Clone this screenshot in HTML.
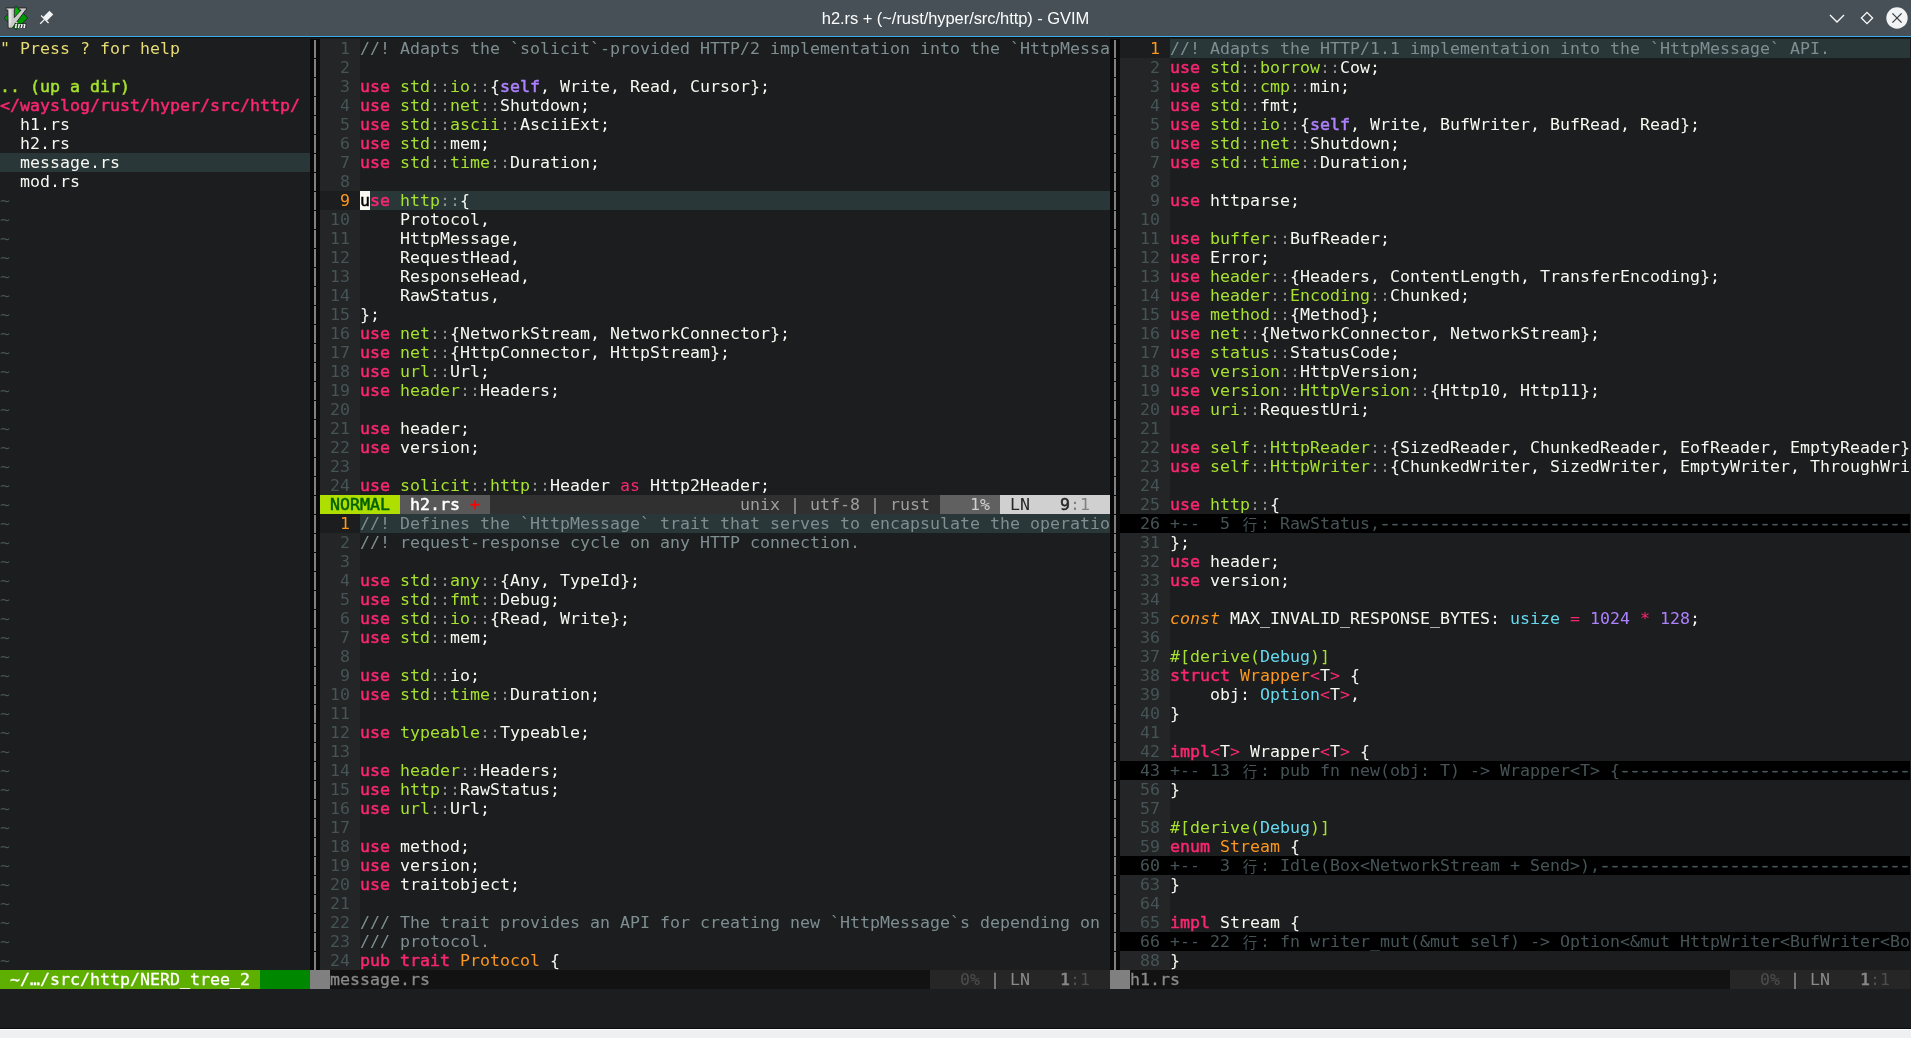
<!DOCTYPE html><html><head><meta charset="utf-8"><title>h2.rs + (~/rust/hyper/src/http) - GVIM</title><style>
html,body{margin:0;padding:0;}
body{width:1911px;height:1038px;overflow:hidden;background:#1b1d1e;position:relative;}
#tb{position:absolute;left:0;top:0;width:1911px;height:36px;background:#475057;}
#tbl{position:absolute;left:0;top:36px;width:1911px;height:1px;background:#3daee9;}
#tbd{position:absolute;left:0;top:37px;width:1911px;height:1px;background:#0e0f10;}
#title{position:absolute;left:0;top:0;width:1911px;height:36px;line-height:36px;text-align:center;color:#fcfcfc;font-family:"Liberation Sans",sans-serif;font-size:16.5px;letter-spacing:-0.06px;will-change:transform;}
#bot{position:absolute;left:0;top:1028px;width:1911px;height:10px;background:#eff0f1;border-top:1px solid #0c0d0e;box-shadow:inset 0 1px 0 #fff;box-sizing:border-box;}
#ed{position:absolute;left:0;top:0;will-change:transform;font-family:"DejaVu Sans Mono","Noto Sans CJK SC",monospace;font-size:16.6px;letter-spacing:0.0060px;line-height:19px;color:#f8f8f2;}
.r{position:absolute;height:19px;white-space:pre;overflow:hidden;}
.r>u{text-decoration:none;display:block;position:relative;top:0.0px;height:19px;}
.r span{display:inline-block;height:19px;vertical-align:top;}
.w1{width:10px}.w2{width:20px}.w3{width:30px}.w4{width:40px}.w5{width:50px}.w6{width:60px}.w7{width:70px}.w8{width:80px}.w9{width:90px}.w10{width:100px}.w11{width:110px}.w12{width:120px}
.k,.s,.dir,.root,.st-mode,.st-file,.nt-a,.b9,.b1,.nc,.bar,.cursor{font-weight:normal;-webkit-text-stroke:0.5px;}
.nt-a,.nc,.bar{-webkit-text-stroke-width:0.3px;}
.k,.p,.root{color:#f92672;}
.g,.dir{color:#a6e22e;}
.d{color:#8f8f8f;}
.s,.num{color:#ae81ff;}
.o{color:#fd971f;}
.const{color:#fd971f;font-style:italic;}
.t{color:#66d9ef;}
.c{color:#7e8e91;}
.y{color:#e6db74;}
.n{color:#465457;}
.cl{background:#293739;}
.ln{background:#232526;color:#465457;}
.ln.cur{color:#fd971f;background:#1b1d1e;}
.fd{background:#000;color:#465457;}
.r .cjk{width:20px;text-align:center;letter-spacing:0;font-family:"Noto Sans CJK SC",sans-serif;font-size:14.5px;position:relative;top:-0.5px;}
.dash{text-shadow:0.8px 0 0 currentColor,-0.8px 0 0 currentColor;}
.vs{background:#080808;}
.vs i{position:absolute;left:4px;top:1px;width:2px;height:18px;background:#808080;}
.cursor{background:#f8f8f0;color:#000;}
.st-mode{background:#afdf00;color:#005f00;}
.st-file{background:#585858;color:#fff;}
.plus{color:#ff0000;}
.st-mid{background:#303030;color:#9e9e9e;}
.st-pct{background:#606060;color:#d0d0d0;}
.st-ln{background:#d0d0d0;color:#262626;}
.dim{color:#808080;}
.nt-a{background:#5faf00;color:#fff;}
.nt-b{background:#008700;}
.blk{background:#808080;}
.nc{background:#121212;color:#8a8a8a;}
.nc2{background:#262626;color:#8a8a8a;}
.dd{color:#4e4e4e;}
</style></head><body>
<div id="tb"></div><div id="tbl"></div><div id="tbd"></div>
<div id="title">h2.rs + (~/rust/hyper/src/http) - GVIM</div>
<svg id="ic" width="1911" height="36" viewBox="0 0 1911 36" style="position:absolute;left:0;top:0">
<g id="vim">
<polygon points="16,6.3 27.8,18 16,29.7 4.2,18" fill="#009a00" stroke="#0b2a2a" stroke-width="0.9"/>
<polygon points="16,7.4 21,12.4 16,17.4 11,12.4" fill="#00b400"/>
<polygon points="5.9,7.9 14.65,7.9 14.65,10 14.3,10 14.3,17.6 21.1,10 19,10 19,7.9 26.4,7.9 26.4,10 25.6,10 12.1,28.2 8.2,28.2 7.9,10 5.9,10" fill="#cbcbcb" stroke="#242424" stroke-width="0.9" stroke-linejoin="round"/>
<polygon points="8.8,9 11.4,9 11.4,21 9.4,26.8 8.8,26.8" fill="#e2e2e2"/>
<rect x="14.4" y="23" width="12" height="5" fill="#1c1c1c" opacity="0.55"/>
<text x="14.6" y="27.7" font-family="Liberation Serif,serif" font-style="italic" font-weight="bold" font-size="7.5" fill="#f4f4f4" textLength="11.5" lengthAdjust="spacingAndGlyphs">im</text>
</g>
<g id="pin" transform="translate(44.85,19.15) rotate(45)" fill="#f2f3f4">
<rect x="-2.7" y="-9.2" width="5.4" height="9.2"/>
<rect x="-5.3" y="-0.6" width="10.6" height="1.3"/>
<rect x="-0.65" y="0" width="1.3" height="6.6"/>
</g>
<g fill="none" stroke="#fcfcfc" stroke-width="1.3">
<polyline points="1830,15 1837,22 1844,15"/>
<polygon points="1867,12.4 1872.6,18 1867,23.6 1861.4,18"/>
</g>
<circle cx="1897" cy="18" r="10.7" fill="#f2f3f4"/>
<g stroke="#3a4248" stroke-width="1.3"><line x1="1892.4" y1="13.4" x2="1901.6" y2="22.6"/><line x1="1901.6" y1="13.4" x2="1892.4" y2="22.6"/></g>
</svg>

<div id="ed">
<div class="r" style="left:0px;top:39px;width:310px"><u><span class="y w2">" </span><span class="y w6">Press </span><span class="y w2">? </span><span class="y w4">for </span><span class="y w4">help</span></u></div>
<div class="r" style="left:0px;top:77px;width:310px"><u><span class="dir w3">.. </span><span class="dir w4">(up </span><span class="dir w2">a </span><span class="dir w4">dir)</span></u></div>
<div class="r" style="left:0px;top:96px;width:310px"><u><span class="root w12">&lt;/wayslog/ru</span><span class="root w12">st/hyper/src</span><span class="root w6">/http/</span></u></div>
<div class="r" style="left:0px;top:115px;width:310px"><u><span class="w2">  </span><span class="w5">h1.rs</span></u></div>
<div class="r" style="left:0px;top:134px;width:310px"><u><span class="w2">  </span><span class="w5">h2.rs</span></u></div>
<div class="r cl" style="left:0px;top:153px;width:310px"><u><span class="w2">  </span><span class="w10">message.rs</span></u></div>
<div class="r" style="left:0px;top:172px;width:310px"><u><span class="w2">  </span><span class="w6">mod.rs</span></u></div>
<div class="r" style="left:0px;top:191px;width:310px"><u><span class="n w1">~</span></u></div>
<div class="r" style="left:0px;top:210px;width:310px"><u><span class="n w1">~</span></u></div>
<div class="r" style="left:0px;top:229px;width:310px"><u><span class="n w1">~</span></u></div>
<div class="r" style="left:0px;top:248px;width:310px"><u><span class="n w1">~</span></u></div>
<div class="r" style="left:0px;top:267px;width:310px"><u><span class="n w1">~</span></u></div>
<div class="r" style="left:0px;top:286px;width:310px"><u><span class="n w1">~</span></u></div>
<div class="r" style="left:0px;top:305px;width:310px"><u><span class="n w1">~</span></u></div>
<div class="r" style="left:0px;top:324px;width:310px"><u><span class="n w1">~</span></u></div>
<div class="r" style="left:0px;top:343px;width:310px"><u><span class="n w1">~</span></u></div>
<div class="r" style="left:0px;top:362px;width:310px"><u><span class="n w1">~</span></u></div>
<div class="r" style="left:0px;top:381px;width:310px"><u><span class="n w1">~</span></u></div>
<div class="r" style="left:0px;top:400px;width:310px"><u><span class="n w1">~</span></u></div>
<div class="r" style="left:0px;top:419px;width:310px"><u><span class="n w1">~</span></u></div>
<div class="r" style="left:0px;top:438px;width:310px"><u><span class="n w1">~</span></u></div>
<div class="r" style="left:0px;top:457px;width:310px"><u><span class="n w1">~</span></u></div>
<div class="r" style="left:0px;top:476px;width:310px"><u><span class="n w1">~</span></u></div>
<div class="r" style="left:0px;top:495px;width:310px"><u><span class="n w1">~</span></u></div>
<div class="r" style="left:0px;top:514px;width:310px"><u><span class="n w1">~</span></u></div>
<div class="r" style="left:0px;top:533px;width:310px"><u><span class="n w1">~</span></u></div>
<div class="r" style="left:0px;top:552px;width:310px"><u><span class="n w1">~</span></u></div>
<div class="r" style="left:0px;top:571px;width:310px"><u><span class="n w1">~</span></u></div>
<div class="r" style="left:0px;top:590px;width:310px"><u><span class="n w1">~</span></u></div>
<div class="r" style="left:0px;top:609px;width:310px"><u><span class="n w1">~</span></u></div>
<div class="r" style="left:0px;top:628px;width:310px"><u><span class="n w1">~</span></u></div>
<div class="r" style="left:0px;top:647px;width:310px"><u><span class="n w1">~</span></u></div>
<div class="r" style="left:0px;top:666px;width:310px"><u><span class="n w1">~</span></u></div>
<div class="r" style="left:0px;top:685px;width:310px"><u><span class="n w1">~</span></u></div>
<div class="r" style="left:0px;top:704px;width:310px"><u><span class="n w1">~</span></u></div>
<div class="r" style="left:0px;top:723px;width:310px"><u><span class="n w1">~</span></u></div>
<div class="r" style="left:0px;top:742px;width:310px"><u><span class="n w1">~</span></u></div>
<div class="r" style="left:0px;top:761px;width:310px"><u><span class="n w1">~</span></u></div>
<div class="r" style="left:0px;top:780px;width:310px"><u><span class="n w1">~</span></u></div>
<div class="r" style="left:0px;top:799px;width:310px"><u><span class="n w1">~</span></u></div>
<div class="r" style="left:0px;top:818px;width:310px"><u><span class="n w1">~</span></u></div>
<div class="r" style="left:0px;top:837px;width:310px"><u><span class="n w1">~</span></u></div>
<div class="r" style="left:0px;top:856px;width:310px"><u><span class="n w1">~</span></u></div>
<div class="r" style="left:0px;top:875px;width:310px"><u><span class="n w1">~</span></u></div>
<div class="r" style="left:0px;top:894px;width:310px"><u><span class="n w1">~</span></u></div>
<div class="r" style="left:0px;top:913px;width:310px"><u><span class="n w1">~</span></u></div>
<div class="r" style="left:0px;top:932px;width:310px"><u><span class="n w1">~</span></u></div>
<div class="r" style="left:0px;top:951px;width:310px"><u><span class="n w1">~</span></u></div>
<div class="r vs" style="left:310px;top:39px;width:10px"><i></i></div>
<div class="r vs" style="left:1110px;top:39px;width:10px"><i></i></div>
<div class="r vs" style="left:310px;top:58px;width:10px"><i></i></div>
<div class="r vs" style="left:1110px;top:58px;width:10px"><i></i></div>
<div class="r vs" style="left:310px;top:77px;width:10px"><i></i></div>
<div class="r vs" style="left:1110px;top:77px;width:10px"><i></i></div>
<div class="r vs" style="left:310px;top:96px;width:10px"><i></i></div>
<div class="r vs" style="left:1110px;top:96px;width:10px"><i></i></div>
<div class="r vs" style="left:310px;top:115px;width:10px"><i></i></div>
<div class="r vs" style="left:1110px;top:115px;width:10px"><i></i></div>
<div class="r vs" style="left:310px;top:134px;width:10px"><i></i></div>
<div class="r vs" style="left:1110px;top:134px;width:10px"><i></i></div>
<div class="r vs" style="left:310px;top:153px;width:10px"><i></i></div>
<div class="r vs" style="left:1110px;top:153px;width:10px"><i></i></div>
<div class="r vs" style="left:310px;top:172px;width:10px"><i></i></div>
<div class="r vs" style="left:1110px;top:172px;width:10px"><i></i></div>
<div class="r vs" style="left:310px;top:191px;width:10px"><i></i></div>
<div class="r vs" style="left:1110px;top:191px;width:10px"><i></i></div>
<div class="r vs" style="left:310px;top:210px;width:10px"><i></i></div>
<div class="r vs" style="left:1110px;top:210px;width:10px"><i></i></div>
<div class="r vs" style="left:310px;top:229px;width:10px"><i></i></div>
<div class="r vs" style="left:1110px;top:229px;width:10px"><i></i></div>
<div class="r vs" style="left:310px;top:248px;width:10px"><i></i></div>
<div class="r vs" style="left:1110px;top:248px;width:10px"><i></i></div>
<div class="r vs" style="left:310px;top:267px;width:10px"><i></i></div>
<div class="r vs" style="left:1110px;top:267px;width:10px"><i></i></div>
<div class="r vs" style="left:310px;top:286px;width:10px"><i></i></div>
<div class="r vs" style="left:1110px;top:286px;width:10px"><i></i></div>
<div class="r vs" style="left:310px;top:305px;width:10px"><i></i></div>
<div class="r vs" style="left:1110px;top:305px;width:10px"><i></i></div>
<div class="r vs" style="left:310px;top:324px;width:10px"><i></i></div>
<div class="r vs" style="left:1110px;top:324px;width:10px"><i></i></div>
<div class="r vs" style="left:310px;top:343px;width:10px"><i></i></div>
<div class="r vs" style="left:1110px;top:343px;width:10px"><i></i></div>
<div class="r vs" style="left:310px;top:362px;width:10px"><i></i></div>
<div class="r vs" style="left:1110px;top:362px;width:10px"><i></i></div>
<div class="r vs" style="left:310px;top:381px;width:10px"><i></i></div>
<div class="r vs" style="left:1110px;top:381px;width:10px"><i></i></div>
<div class="r vs" style="left:310px;top:400px;width:10px"><i></i></div>
<div class="r vs" style="left:1110px;top:400px;width:10px"><i></i></div>
<div class="r vs" style="left:310px;top:419px;width:10px"><i></i></div>
<div class="r vs" style="left:1110px;top:419px;width:10px"><i></i></div>
<div class="r vs" style="left:310px;top:438px;width:10px"><i></i></div>
<div class="r vs" style="left:1110px;top:438px;width:10px"><i></i></div>
<div class="r vs" style="left:310px;top:457px;width:10px"><i></i></div>
<div class="r vs" style="left:1110px;top:457px;width:10px"><i></i></div>
<div class="r vs" style="left:310px;top:476px;width:10px"><i></i></div>
<div class="r vs" style="left:1110px;top:476px;width:10px"><i></i></div>
<div class="r vs" style="left:310px;top:495px;width:10px"><i></i></div>
<div class="r vs" style="left:1110px;top:495px;width:10px"><i></i></div>
<div class="r vs" style="left:310px;top:514px;width:10px"><i></i></div>
<div class="r vs" style="left:1110px;top:514px;width:10px"><i></i></div>
<div class="r vs" style="left:310px;top:533px;width:10px"><i></i></div>
<div class="r vs" style="left:1110px;top:533px;width:10px"><i></i></div>
<div class="r vs" style="left:310px;top:552px;width:10px"><i></i></div>
<div class="r vs" style="left:1110px;top:552px;width:10px"><i></i></div>
<div class="r vs" style="left:310px;top:571px;width:10px"><i></i></div>
<div class="r vs" style="left:1110px;top:571px;width:10px"><i></i></div>
<div class="r vs" style="left:310px;top:590px;width:10px"><i></i></div>
<div class="r vs" style="left:1110px;top:590px;width:10px"><i></i></div>
<div class="r vs" style="left:310px;top:609px;width:10px"><i></i></div>
<div class="r vs" style="left:1110px;top:609px;width:10px"><i></i></div>
<div class="r vs" style="left:310px;top:628px;width:10px"><i></i></div>
<div class="r vs" style="left:1110px;top:628px;width:10px"><i></i></div>
<div class="r vs" style="left:310px;top:647px;width:10px"><i></i></div>
<div class="r vs" style="left:1110px;top:647px;width:10px"><i></i></div>
<div class="r vs" style="left:310px;top:666px;width:10px"><i></i></div>
<div class="r vs" style="left:1110px;top:666px;width:10px"><i></i></div>
<div class="r vs" style="left:310px;top:685px;width:10px"><i></i></div>
<div class="r vs" style="left:1110px;top:685px;width:10px"><i></i></div>
<div class="r vs" style="left:310px;top:704px;width:10px"><i></i></div>
<div class="r vs" style="left:1110px;top:704px;width:10px"><i></i></div>
<div class="r vs" style="left:310px;top:723px;width:10px"><i></i></div>
<div class="r vs" style="left:1110px;top:723px;width:10px"><i></i></div>
<div class="r vs" style="left:310px;top:742px;width:10px"><i></i></div>
<div class="r vs" style="left:1110px;top:742px;width:10px"><i></i></div>
<div class="r vs" style="left:310px;top:761px;width:10px"><i></i></div>
<div class="r vs" style="left:1110px;top:761px;width:10px"><i></i></div>
<div class="r vs" style="left:310px;top:780px;width:10px"><i></i></div>
<div class="r vs" style="left:1110px;top:780px;width:10px"><i></i></div>
<div class="r vs" style="left:310px;top:799px;width:10px"><i></i></div>
<div class="r vs" style="left:1110px;top:799px;width:10px"><i></i></div>
<div class="r vs" style="left:310px;top:818px;width:10px"><i></i></div>
<div class="r vs" style="left:1110px;top:818px;width:10px"><i></i></div>
<div class="r vs" style="left:310px;top:837px;width:10px"><i></i></div>
<div class="r vs" style="left:1110px;top:837px;width:10px"><i></i></div>
<div class="r vs" style="left:310px;top:856px;width:10px"><i></i></div>
<div class="r vs" style="left:1110px;top:856px;width:10px"><i></i></div>
<div class="r vs" style="left:310px;top:875px;width:10px"><i></i></div>
<div class="r vs" style="left:1110px;top:875px;width:10px"><i></i></div>
<div class="r vs" style="left:310px;top:894px;width:10px"><i></i></div>
<div class="r vs" style="left:1110px;top:894px;width:10px"><i></i></div>
<div class="r vs" style="left:310px;top:913px;width:10px"><i></i></div>
<div class="r vs" style="left:1110px;top:913px;width:10px"><i></i></div>
<div class="r vs" style="left:310px;top:932px;width:10px"><i></i></div>
<div class="r vs" style="left:1110px;top:932px;width:10px"><i></i></div>
<div class="r vs" style="left:310px;top:951px;width:10px"><i></i></div>
<div class="r vs" style="left:1110px;top:951px;width:10px"><i></i></div>
<div class="r ln" style="left:320px;top:39px;width:40px"><u><span class="w2">  </span><span class="w2">1 </span></u></div>
<div class="r" style="left:360px;top:39px;width:750px"><u><span class="c w4">//! </span><span class="c w7">Adapts </span><span class="c w4">the </span><span class="c w12">`solicit`-pr</span><span class="c w7">ovided </span><span class="c w7">HTTP/2 </span><span class="c w12">implementati</span><span class="c w3">on </span><span class="c w5">into </span><span class="c w4">the </span><span class="c w10">`HttpMessa</span></u></div>
<div class="r ln" style="left:320px;top:58px;width:40px"><u><span class="w2">  </span><span class="w2">2 </span></u></div>
<div class="r ln" style="left:320px;top:77px;width:40px"><u><span class="w2">  </span><span class="w2">3 </span></u></div>
<div class="r" style="left:360px;top:77px;width:750px"><u><span class="k w3">use</span><span class="w1"> </span><span class="g w3">std</span><span class="d w2">::</span><span class="g w2">io</span><span class="d w2">::</span><span class="w1">{</span><span class="s w4">self</span><span class="w2">, </span><span class="w7">Write, </span><span class="w6">Read, </span><span class="w8">Cursor};</span></u></div>
<div class="r ln" style="left:320px;top:96px;width:40px"><u><span class="w2">  </span><span class="w2">4 </span></u></div>
<div class="r" style="left:360px;top:96px;width:750px"><u><span class="k w3">use</span><span class="w1"> </span><span class="g w3">std</span><span class="d w2">::</span><span class="g w3">net</span><span class="d w2">::</span><span class="w9">Shutdown;</span></u></div>
<div class="r ln" style="left:320px;top:115px;width:40px"><u><span class="w2">  </span><span class="w2">5 </span></u></div>
<div class="r" style="left:360px;top:115px;width:750px"><u><span class="k w3">use</span><span class="w1"> </span><span class="g w3">std</span><span class="d w2">::</span><span class="g w5">ascii</span><span class="d w2">::</span><span class="w9">AsciiExt;</span></u></div>
<div class="r ln" style="left:320px;top:134px;width:40px"><u><span class="w2">  </span><span class="w2">6 </span></u></div>
<div class="r" style="left:360px;top:134px;width:750px"><u><span class="k w3">use</span><span class="w1"> </span><span class="g w3">std</span><span class="d w2">::</span><span class="w4">mem;</span></u></div>
<div class="r ln" style="left:320px;top:153px;width:40px"><u><span class="w2">  </span><span class="w2">7 </span></u></div>
<div class="r" style="left:360px;top:153px;width:750px"><u><span class="k w3">use</span><span class="w1"> </span><span class="g w3">std</span><span class="d w2">::</span><span class="g w4">time</span><span class="d w2">::</span><span class="w9">Duration;</span></u></div>
<div class="r ln" style="left:320px;top:172px;width:40px"><u><span class="w2">  </span><span class="w2">8 </span></u></div>
<div class="r ln cur" style="left:320px;top:191px;width:40px"><u><span class="w2">  </span><span class="w2">9 </span></u></div>
<div class="r cl" style="left:360px;top:191px;width:750px"><u><span class="cursor w1">u</span><span class="k w2">se</span><span class="w1"> </span><span class="g w4">http</span><span class="d w2">::</span><span class="w1">{</span></u></div>
<div class="r ln" style="left:320px;top:210px;width:40px"><u><span class="w1"> </span><span class="w3">10 </span></u></div>
<div class="r" style="left:360px;top:210px;width:750px"><u><span class="w4">    </span><span class="w9">Protocol,</span></u></div>
<div class="r ln" style="left:320px;top:229px;width:40px"><u><span class="w1"> </span><span class="w3">11 </span></u></div>
<div class="r" style="left:360px;top:229px;width:750px"><u><span class="w4">    </span><span class="w12">HttpMessage,</span></u></div>
<div class="r ln" style="left:320px;top:248px;width:40px"><u><span class="w1"> </span><span class="w3">12 </span></u></div>
<div class="r" style="left:360px;top:248px;width:750px"><u><span class="w4">    </span><span class="w12">RequestHead,</span></u></div>
<div class="r ln" style="left:320px;top:267px;width:40px"><u><span class="w1"> </span><span class="w3">13 </span></u></div>
<div class="r" style="left:360px;top:267px;width:750px"><u><span class="w4">    </span><span class="w12">ResponseHead</span><span class="w1">,</span></u></div>
<div class="r ln" style="left:320px;top:286px;width:40px"><u><span class="w1"> </span><span class="w3">14 </span></u></div>
<div class="r" style="left:360px;top:286px;width:750px"><u><span class="w4">    </span><span class="w10">RawStatus,</span></u></div>
<div class="r ln" style="left:320px;top:305px;width:40px"><u><span class="w1"> </span><span class="w3">15 </span></u></div>
<div class="r" style="left:360px;top:305px;width:750px"><u><span class="w2">};</span></u></div>
<div class="r ln" style="left:320px;top:324px;width:40px"><u><span class="w1"> </span><span class="w3">16 </span></u></div>
<div class="r" style="left:360px;top:324px;width:750px"><u><span class="k w3">use</span><span class="w1"> </span><span class="g w3">net</span><span class="d w2">::</span><span class="w12">{NetworkStre</span><span class="w4">am, </span><span class="w12">NetworkConne</span><span class="w6">ctor};</span></u></div>
<div class="r ln" style="left:320px;top:343px;width:40px"><u><span class="w1"> </span><span class="w3">17 </span></u></div>
<div class="r" style="left:360px;top:343px;width:750px"><u><span class="k w3">use</span><span class="w1"> </span><span class="g w3">net</span><span class="d w2">::</span><span class="w12">{HttpConnect</span><span class="w4">or, </span><span class="w12">HttpStream};</span></u></div>
<div class="r ln" style="left:320px;top:362px;width:40px"><u><span class="w1"> </span><span class="w3">18 </span></u></div>
<div class="r" style="left:360px;top:362px;width:750px"><u><span class="k w3">use</span><span class="w1"> </span><span class="g w3">url</span><span class="d w2">::</span><span class="w4">Url;</span></u></div>
<div class="r ln" style="left:320px;top:381px;width:40px"><u><span class="w1"> </span><span class="w3">19 </span></u></div>
<div class="r" style="left:360px;top:381px;width:750px"><u><span class="k w3">use</span><span class="w1"> </span><span class="g w6">header</span><span class="d w2">::</span><span class="w8">Headers;</span></u></div>
<div class="r ln" style="left:320px;top:400px;width:40px"><u><span class="w1"> </span><span class="w3">20 </span></u></div>
<div class="r ln" style="left:320px;top:419px;width:40px"><u><span class="w1"> </span><span class="w3">21 </span></u></div>
<div class="r" style="left:360px;top:419px;width:750px"><u><span class="k w3">use</span><span class="w1"> </span><span class="w7">header;</span></u></div>
<div class="r ln" style="left:320px;top:438px;width:40px"><u><span class="w1"> </span><span class="w3">22 </span></u></div>
<div class="r" style="left:360px;top:438px;width:750px"><u><span class="k w3">use</span><span class="w1"> </span><span class="w8">version;</span></u></div>
<div class="r ln" style="left:320px;top:457px;width:40px"><u><span class="w1"> </span><span class="w3">23 </span></u></div>
<div class="r ln" style="left:320px;top:476px;width:40px"><u><span class="w1"> </span><span class="w3">24 </span></u></div>
<div class="r" style="left:360px;top:476px;width:750px"><u><span class="k w3">use</span><span class="w1"> </span><span class="g w7">solicit</span><span class="d w2">::</span><span class="g w4">http</span><span class="d w2">::</span><span class="w6">Header</span><span class="w1"> </span><span class="p w2">as</span><span class="w1"> </span><span class="w12">Http2Header;</span></u></div>
<div class="r st-mode" style="left:320px;top:495px;width:80px"><u><span class="w1"> </span><span class="w7">NORMAL </span></u></div>
<div class="r st-file" style="left:400px;top:495px;width:90px"><u><span class="w1"> </span><span class="w6">h2.rs </span><span class="plus w1">+</span><span class="w1"> </span></u></div>
<div class="r st-mid" style="left:490px;top:495px;width:450px"><u><span class="w12">            </span><span class="w12">            </span><span class="w1"> </span><span class="w5">unix </span><span class="w2">| </span><span class="w6">utf-8 </span><span class="w2">| </span><span class="w5">rust </span></u></div>
<div class="r st-pct" style="left:940px;top:495px;width:60px"><u><span class="w3">   </span><span class="w3">1% </span></u></div>
<div class="r st-ln" style="left:1000px;top:495px;width:110px"><u><span class="w1"> </span><span class="w5">LN   </span><span class="b9 w1">9</span><span class="dim w2">:1</span><span class="w2">  </span></u></div>
<div class="r ln cur" style="left:320px;top:514px;width:40px"><u><span class="w2">  </span><span class="w2">1 </span></u></div>
<div class="r cl" style="left:360px;top:514px;width:750px"><u><span class="c w4">//! </span><span class="c w8">Defines </span><span class="c w4">the </span><span class="c w12">`HttpMessage</span><span class="c w2">` </span><span class="c w6">trait </span><span class="c w5">that </span><span class="c w7">serves </span><span class="c w3">to </span><span class="c w12">encapsulate </span><span class="c w4">the </span><span class="c w8">operatio</span></u></div>
<div class="r ln" style="left:320px;top:533px;width:40px"><u><span class="w2">  </span><span class="w2">2 </span></u></div>
<div class="r" style="left:360px;top:533px;width:750px"><u><span class="c w4">//! </span><span class="c w12">request-resp</span><span class="c w5">onse </span><span class="c w6">cycle </span><span class="c w3">on </span><span class="c w4">any </span><span class="c w5">HTTP </span><span class="c w11">connection.</span></u></div>
<div class="r ln" style="left:320px;top:552px;width:40px"><u><span class="w2">  </span><span class="w2">3 </span></u></div>
<div class="r ln" style="left:320px;top:571px;width:40px"><u><span class="w2">  </span><span class="w2">4 </span></u></div>
<div class="r" style="left:360px;top:571px;width:750px"><u><span class="k w3">use</span><span class="w1"> </span><span class="g w3">std</span><span class="d w2">::</span><span class="g w3">any</span><span class="d w2">::</span><span class="w6">{Any, </span><span class="w8">TypeId};</span></u></div>
<div class="r ln" style="left:320px;top:590px;width:40px"><u><span class="w2">  </span><span class="w2">5 </span></u></div>
<div class="r" style="left:360px;top:590px;width:750px"><u><span class="k w3">use</span><span class="w1"> </span><span class="g w3">std</span><span class="d w2">::</span><span class="g w3">fmt</span><span class="d w2">::</span><span class="w6">Debug;</span></u></div>
<div class="r ln" style="left:320px;top:609px;width:40px"><u><span class="w2">  </span><span class="w2">6 </span></u></div>
<div class="r" style="left:360px;top:609px;width:750px"><u><span class="k w3">use</span><span class="w1"> </span><span class="g w3">std</span><span class="d w2">::</span><span class="g w2">io</span><span class="d w2">::</span><span class="w7">{Read, </span><span class="w7">Write};</span></u></div>
<div class="r ln" style="left:320px;top:628px;width:40px"><u><span class="w2">  </span><span class="w2">7 </span></u></div>
<div class="r" style="left:360px;top:628px;width:750px"><u><span class="k w3">use</span><span class="w1"> </span><span class="g w3">std</span><span class="d w2">::</span><span class="w4">mem;</span></u></div>
<div class="r ln" style="left:320px;top:647px;width:40px"><u><span class="w2">  </span><span class="w2">8 </span></u></div>
<div class="r ln" style="left:320px;top:666px;width:40px"><u><span class="w2">  </span><span class="w2">9 </span></u></div>
<div class="r" style="left:360px;top:666px;width:750px"><u><span class="k w3">use</span><span class="w1"> </span><span class="g w3">std</span><span class="d w2">::</span><span class="w3">io;</span></u></div>
<div class="r ln" style="left:320px;top:685px;width:40px"><u><span class="w1"> </span><span class="w3">10 </span></u></div>
<div class="r" style="left:360px;top:685px;width:750px"><u><span class="k w3">use</span><span class="w1"> </span><span class="g w3">std</span><span class="d w2">::</span><span class="g w4">time</span><span class="d w2">::</span><span class="w9">Duration;</span></u></div>
<div class="r ln" style="left:320px;top:704px;width:40px"><u><span class="w1"> </span><span class="w3">11 </span></u></div>
<div class="r ln" style="left:320px;top:723px;width:40px"><u><span class="w1"> </span><span class="w3">12 </span></u></div>
<div class="r" style="left:360px;top:723px;width:750px"><u><span class="k w3">use</span><span class="w1"> </span><span class="g w8">typeable</span><span class="d w2">::</span><span class="w9">Typeable;</span></u></div>
<div class="r ln" style="left:320px;top:742px;width:40px"><u><span class="w1"> </span><span class="w3">13 </span></u></div>
<div class="r ln" style="left:320px;top:761px;width:40px"><u><span class="w1"> </span><span class="w3">14 </span></u></div>
<div class="r" style="left:360px;top:761px;width:750px"><u><span class="k w3">use</span><span class="w1"> </span><span class="g w6">header</span><span class="d w2">::</span><span class="w8">Headers;</span></u></div>
<div class="r ln" style="left:320px;top:780px;width:40px"><u><span class="w1"> </span><span class="w3">15 </span></u></div>
<div class="r" style="left:360px;top:780px;width:750px"><u><span class="k w3">use</span><span class="w1"> </span><span class="g w4">http</span><span class="d w2">::</span><span class="w10">RawStatus;</span></u></div>
<div class="r ln" style="left:320px;top:799px;width:40px"><u><span class="w1"> </span><span class="w3">16 </span></u></div>
<div class="r" style="left:360px;top:799px;width:750px"><u><span class="k w3">use</span><span class="w1"> </span><span class="g w3">url</span><span class="d w2">::</span><span class="w4">Url;</span></u></div>
<div class="r ln" style="left:320px;top:818px;width:40px"><u><span class="w1"> </span><span class="w3">17 </span></u></div>
<div class="r ln" style="left:320px;top:837px;width:40px"><u><span class="w1"> </span><span class="w3">18 </span></u></div>
<div class="r" style="left:360px;top:837px;width:750px"><u><span class="k w3">use</span><span class="w1"> </span><span class="w7">method;</span></u></div>
<div class="r ln" style="left:320px;top:856px;width:40px"><u><span class="w1"> </span><span class="w3">19 </span></u></div>
<div class="r" style="left:360px;top:856px;width:750px"><u><span class="k w3">use</span><span class="w1"> </span><span class="w8">version;</span></u></div>
<div class="r ln" style="left:320px;top:875px;width:40px"><u><span class="w1"> </span><span class="w3">20 </span></u></div>
<div class="r" style="left:360px;top:875px;width:750px"><u><span class="k w3">use</span><span class="w1"> </span><span class="w12">traitobject;</span></u></div>
<div class="r ln" style="left:320px;top:894px;width:40px"><u><span class="w1"> </span><span class="w3">21 </span></u></div>
<div class="r ln" style="left:320px;top:913px;width:40px"><u><span class="w1"> </span><span class="w3">22 </span></u></div>
<div class="r" style="left:360px;top:913px;width:750px"><u><span class="c w4">/// </span><span class="c w4">The </span><span class="c w6">trait </span><span class="c w9">provides </span><span class="c w3">an </span><span class="c w4">API </span><span class="c w4">for </span><span class="c w9">creating </span><span class="c w4">new </span><span class="c w12">`HttpMessage</span><span class="c w3">`s </span><span class="c w10">depending </span><span class="c w2">on</span></u></div>
<div class="r ln" style="left:320px;top:932px;width:40px"><u><span class="w1"> </span><span class="w3">23 </span></u></div>
<div class="r" style="left:360px;top:932px;width:750px"><u><span class="c w4">/// </span><span class="c w9">protocol.</span></u></div>
<div class="r ln" style="left:320px;top:951px;width:40px"><u><span class="w1"> </span><span class="w3">24 </span></u></div>
<div class="r" style="left:360px;top:951px;width:750px"><u><span class="k w3">pub</span><span class="w1"> </span><span class="k w5">trait</span><span class="w1"> </span><span class="o w8">Protocol</span><span class="w1"> </span><span class="w1">{</span></u></div>
<div class="r ln cur" style="left:1120px;top:39px;width:50px"><u><span class="w3">   </span><span class="w2">1 </span></u></div>
<div class="r cl" style="left:1170px;top:39px;width:740px"><u><span class="c w4">//! </span><span class="c w7">Adapts </span><span class="c w4">the </span><span class="c w9">HTTP/1.1 </span><span class="c w12">implementati</span><span class="c w3">on </span><span class="c w5">into </span><span class="c w4">the </span><span class="c w12">`HttpMessage</span><span class="c w2">` </span><span class="c w4">API.</span></u></div>
<div class="r ln" style="left:1120px;top:58px;width:50px"><u><span class="w3">   </span><span class="w2">2 </span></u></div>
<div class="r" style="left:1170px;top:58px;width:740px"><u><span class="k w3">use</span><span class="w1"> </span><span class="g w3">std</span><span class="d w2">::</span><span class="g w6">borrow</span><span class="d w2">::</span><span class="w4">Cow;</span></u></div>
<div class="r ln" style="left:1120px;top:77px;width:50px"><u><span class="w3">   </span><span class="w2">3 </span></u></div>
<div class="r" style="left:1170px;top:77px;width:740px"><u><span class="k w3">use</span><span class="w1"> </span><span class="g w3">std</span><span class="d w2">::</span><span class="g w3">cmp</span><span class="d w2">::</span><span class="w4">min;</span></u></div>
<div class="r ln" style="left:1120px;top:96px;width:50px"><u><span class="w3">   </span><span class="w2">4 </span></u></div>
<div class="r" style="left:1170px;top:96px;width:740px"><u><span class="k w3">use</span><span class="w1"> </span><span class="g w3">std</span><span class="d w2">::</span><span class="w4">fmt;</span></u></div>
<div class="r ln" style="left:1120px;top:115px;width:50px"><u><span class="w3">   </span><span class="w2">5 </span></u></div>
<div class="r" style="left:1170px;top:115px;width:740px"><u><span class="k w3">use</span><span class="w1"> </span><span class="g w3">std</span><span class="d w2">::</span><span class="g w2">io</span><span class="d w2">::</span><span class="w1">{</span><span class="s w4">self</span><span class="w2">, </span><span class="w7">Write, </span><span class="w11">BufWriter, </span><span class="w9">BufRead, </span><span class="w6">Read};</span></u></div>
<div class="r ln" style="left:1120px;top:134px;width:50px"><u><span class="w3">   </span><span class="w2">6 </span></u></div>
<div class="r" style="left:1170px;top:134px;width:740px"><u><span class="k w3">use</span><span class="w1"> </span><span class="g w3">std</span><span class="d w2">::</span><span class="g w3">net</span><span class="d w2">::</span><span class="w9">Shutdown;</span></u></div>
<div class="r ln" style="left:1120px;top:153px;width:50px"><u><span class="w3">   </span><span class="w2">7 </span></u></div>
<div class="r" style="left:1170px;top:153px;width:740px"><u><span class="k w3">use</span><span class="w1"> </span><span class="g w3">std</span><span class="d w2">::</span><span class="g w4">time</span><span class="d w2">::</span><span class="w9">Duration;</span></u></div>
<div class="r ln" style="left:1120px;top:172px;width:50px"><u><span class="w3">   </span><span class="w2">8 </span></u></div>
<div class="r ln" style="left:1120px;top:191px;width:50px"><u><span class="w3">   </span><span class="w2">9 </span></u></div>
<div class="r" style="left:1170px;top:191px;width:740px"><u><span class="k w3">use</span><span class="w1"> </span><span class="w9">httparse;</span></u></div>
<div class="r ln" style="left:1120px;top:210px;width:50px"><u><span class="w2">  </span><span class="w3">10 </span></u></div>
<div class="r ln" style="left:1120px;top:229px;width:50px"><u><span class="w2">  </span><span class="w3">11 </span></u></div>
<div class="r" style="left:1170px;top:229px;width:740px"><u><span class="k w3">use</span><span class="w1"> </span><span class="g w6">buffer</span><span class="d w2">::</span><span class="w10">BufReader;</span></u></div>
<div class="r ln" style="left:1120px;top:248px;width:50px"><u><span class="w2">  </span><span class="w3">12 </span></u></div>
<div class="r" style="left:1170px;top:248px;width:740px"><u><span class="k w3">use</span><span class="w1"> </span><span class="w6">Error;</span></u></div>
<div class="r ln" style="left:1120px;top:267px;width:50px"><u><span class="w2">  </span><span class="w3">13 </span></u></div>
<div class="r" style="left:1170px;top:267px;width:740px"><u><span class="k w3">use</span><span class="w1"> </span><span class="g w6">header</span><span class="d w2">::</span><span class="w10">{Headers, </span><span class="w12">ContentLengt</span><span class="w3">h, </span><span class="w12">TransferEnco</span><span class="w6">ding};</span></u></div>
<div class="r ln" style="left:1120px;top:286px;width:50px"><u><span class="w2">  </span><span class="w3">14 </span></u></div>
<div class="r" style="left:1170px;top:286px;width:740px"><u><span class="k w3">use</span><span class="w1"> </span><span class="g w6">header</span><span class="d w2">::</span><span class="g w8">Encoding</span><span class="d w2">::</span><span class="w8">Chunked;</span></u></div>
<div class="r ln" style="left:1120px;top:305px;width:50px"><u><span class="w2">  </span><span class="w3">15 </span></u></div>
<div class="r" style="left:1170px;top:305px;width:740px"><u><span class="k w3">use</span><span class="w1"> </span><span class="g w6">method</span><span class="d w2">::</span><span class="w9">{Method};</span></u></div>
<div class="r ln" style="left:1120px;top:324px;width:50px"><u><span class="w2">  </span><span class="w3">16 </span></u></div>
<div class="r" style="left:1170px;top:324px;width:740px"><u><span class="k w3">use</span><span class="w1"> </span><span class="g w3">net</span><span class="d w2">::</span><span class="w12">{NetworkConn</span><span class="w7">ector, </span><span class="w12">NetworkStrea</span><span class="w3">m};</span></u></div>
<div class="r ln" style="left:1120px;top:343px;width:50px"><u><span class="w2">  </span><span class="w3">17 </span></u></div>
<div class="r" style="left:1170px;top:343px;width:740px"><u><span class="k w3">use</span><span class="w1"> </span><span class="g w6">status</span><span class="d w2">::</span><span class="w11">StatusCode;</span></u></div>
<div class="r ln" style="left:1120px;top:362px;width:50px"><u><span class="w2">  </span><span class="w3">18 </span></u></div>
<div class="r" style="left:1170px;top:362px;width:740px"><u><span class="k w3">use</span><span class="w1"> </span><span class="g w7">version</span><span class="d w2">::</span><span class="w12">HttpVersion;</span></u></div>
<div class="r ln" style="left:1120px;top:381px;width:50px"><u><span class="w2">  </span><span class="w3">19 </span></u></div>
<div class="r" style="left:1170px;top:381px;width:740px"><u><span class="k w3">use</span><span class="w1"> </span><span class="g w7">version</span><span class="d w2">::</span><span class="g w11">HttpVersion</span><span class="d w2">::</span><span class="w9">{Http10, </span><span class="w8">Http11};</span></u></div>
<div class="r ln" style="left:1120px;top:400px;width:50px"><u><span class="w2">  </span><span class="w3">20 </span></u></div>
<div class="r" style="left:1170px;top:400px;width:740px"><u><span class="k w3">use</span><span class="w1"> </span><span class="g w3">uri</span><span class="d w2">::</span><span class="w11">RequestUri;</span></u></div>
<div class="r ln" style="left:1120px;top:419px;width:50px"><u><span class="w2">  </span><span class="w3">21 </span></u></div>
<div class="r ln" style="left:1120px;top:438px;width:50px"><u><span class="w2">  </span><span class="w3">22 </span></u></div>
<div class="r" style="left:1170px;top:438px;width:740px"><u><span class="k w3">use</span><span class="w1"> </span><span class="g w4">self</span><span class="d w2">::</span><span class="g w10">HttpReader</span><span class="d w2">::</span><span class="w12">{SizedReader</span><span class="w2">, </span><span class="w12">ChunkedReade</span><span class="w3">r, </span><span class="w11">EofReader, </span><span class="w12">EmptyReader}</span><span class="w1">;</span></u></div>
<div class="r ln" style="left:1120px;top:457px;width:50px"><u><span class="w2">  </span><span class="w3">23 </span></u></div>
<div class="r" style="left:1170px;top:457px;width:740px"><u><span class="k w3">use</span><span class="w1"> </span><span class="g w4">self</span><span class="d w2">::</span><span class="g w10">HttpWriter</span><span class="d w2">::</span><span class="w12">{ChunkedWrit</span><span class="w4">er, </span><span class="w12">SizedWriter,</span><span class="w1"> </span><span class="w12">EmptyWriter,</span><span class="w1"> </span><span class="w10">ThroughWri</span></u></div>
<div class="r ln" style="left:1120px;top:476px;width:50px"><u><span class="w2">  </span><span class="w3">24 </span></u></div>
<div class="r ln" style="left:1120px;top:495px;width:50px"><u><span class="w2">  </span><span class="w3">25 </span></u></div>
<div class="r" style="left:1170px;top:495px;width:740px"><u><span class="k w3">use</span><span class="w1"> </span><span class="g w4">http</span><span class="d w2">::</span><span class="w1">{</span></u></div>
<div class="r fd" style="left:1120px;top:514px;width:50px"><u><span class="w2">  </span><span class="w3">26 </span></u></div>
<div class="r fd" style="left:1170px;top:514px;width:740px"><u><span class="w5">+--  </span><span class="w2">5 </span><span class="cjk">行</span><span class="w2">: </span><span class="w10">RawStatus,</span><span class="dash w12">------------</span><span class="dash w12">------------</span><span class="dash w12">------------</span><span class="dash w12">------------</span><span class="dash w5">-----</span></u></div>
<div class="r ln" style="left:1120px;top:533px;width:50px"><u><span class="w2">  </span><span class="w3">31 </span></u></div>
<div class="r" style="left:1170px;top:533px;width:740px"><u><span class="w2">};</span></u></div>
<div class="r ln" style="left:1120px;top:552px;width:50px"><u><span class="w2">  </span><span class="w3">32 </span></u></div>
<div class="r" style="left:1170px;top:552px;width:740px"><u><span class="k w3">use</span><span class="w1"> </span><span class="w7">header;</span></u></div>
<div class="r ln" style="left:1120px;top:571px;width:50px"><u><span class="w2">  </span><span class="w3">33 </span></u></div>
<div class="r" style="left:1170px;top:571px;width:740px"><u><span class="k w3">use</span><span class="w1"> </span><span class="w8">version;</span></u></div>
<div class="r ln" style="left:1120px;top:590px;width:50px"><u><span class="w2">  </span><span class="w3">34 </span></u></div>
<div class="r ln" style="left:1120px;top:609px;width:50px"><u><span class="w2">  </span><span class="w3">35 </span></u></div>
<div class="r" style="left:1170px;top:609px;width:740px"><u><span class="const w5">const</span><span class="w1"> </span><span class="w12">MAX_INVALID_</span><span class="w12">RESPONSE_BYT</span><span class="w4">ES: </span><span class="t w5">usize</span><span class="w1"> </span><span class="p w1">=</span><span class="w1"> </span><span class="num w4">1024</span><span class="w1"> </span><span class="p w1">*</span><span class="w1"> </span><span class="num w3">128</span><span class="w1">;</span></u></div>
<div class="r ln" style="left:1120px;top:628px;width:50px"><u><span class="w2">  </span><span class="w3">36 </span></u></div>
<div class="r ln" style="left:1120px;top:647px;width:50px"><u><span class="w2">  </span><span class="w3">37 </span></u></div>
<div class="r" style="left:1170px;top:647px;width:740px"><u><span class="g w9">#[derive(</span><span class="t w5">Debug</span><span class="g w2">)]</span></u></div>
<div class="r ln" style="left:1120px;top:666px;width:50px"><u><span class="w2">  </span><span class="w3">38 </span></u></div>
<div class="r" style="left:1170px;top:666px;width:740px"><u><span class="k w6">struct</span><span class="w1"> </span><span class="o w7">Wrapper</span><span class="p w1">&lt;</span><span class="w1">T</span><span class="p w1">&gt;</span><span class="w1"> </span><span class="w1">{</span></u></div>
<div class="r ln" style="left:1120px;top:685px;width:50px"><u><span class="w2">  </span><span class="w3">39 </span></u></div>
<div class="r" style="left:1170px;top:685px;width:740px"><u><span class="w4">    </span><span class="w5">obj: </span><span class="t w6">Option</span><span class="p w1">&lt;</span><span class="w1">T</span><span class="p w1">&gt;</span><span class="w1">,</span></u></div>
<div class="r ln" style="left:1120px;top:704px;width:50px"><u><span class="w2">  </span><span class="w3">40 </span></u></div>
<div class="r" style="left:1170px;top:704px;width:740px"><u><span class="w1">}</span></u></div>
<div class="r ln" style="left:1120px;top:723px;width:50px"><u><span class="w2">  </span><span class="w3">41 </span></u></div>
<div class="r ln" style="left:1120px;top:742px;width:50px"><u><span class="w2">  </span><span class="w3">42 </span></u></div>
<div class="r" style="left:1170px;top:742px;width:740px"><u><span class="k w4">impl</span><span class="p w1">&lt;</span><span class="w1">T</span><span class="p w1">&gt;</span><span class="w1"> </span><span class="w7">Wrapper</span><span class="p w1">&lt;</span><span class="w1">T</span><span class="p w1">&gt;</span><span class="w1"> </span><span class="w1">{</span></u></div>
<div class="r fd" style="left:1120px;top:761px;width:50px"><u><span class="w2">  </span><span class="w3">43 </span></u></div>
<div class="r fd" style="left:1170px;top:761px;width:740px"><u><span class="w4">+-- </span><span class="w3">13 </span><span class="cjk">行</span><span class="w2">: </span><span class="w4">pub </span><span class="w3">fn </span><span class="w9">new(obj: </span><span class="w3">T) </span><span class="w3">-&gt; </span><span class="w11">Wrapper&lt;T&gt; </span><span class="w1">{</span><span class="dash w12">------------</span><span class="dash w12">------------</span><span class="dash w5">-----</span></u></div>
<div class="r ln" style="left:1120px;top:780px;width:50px"><u><span class="w2">  </span><span class="w3">56 </span></u></div>
<div class="r" style="left:1170px;top:780px;width:740px"><u><span class="w1">}</span></u></div>
<div class="r ln" style="left:1120px;top:799px;width:50px"><u><span class="w2">  </span><span class="w3">57 </span></u></div>
<div class="r ln" style="left:1120px;top:818px;width:50px"><u><span class="w2">  </span><span class="w3">58 </span></u></div>
<div class="r" style="left:1170px;top:818px;width:740px"><u><span class="g w9">#[derive(</span><span class="t w5">Debug</span><span class="g w2">)]</span></u></div>
<div class="r ln" style="left:1120px;top:837px;width:50px"><u><span class="w2">  </span><span class="w3">59 </span></u></div>
<div class="r" style="left:1170px;top:837px;width:740px"><u><span class="k w4">enum</span><span class="w1"> </span><span class="o w6">Stream</span><span class="w1"> </span><span class="w1">{</span></u></div>
<div class="r fd" style="left:1120px;top:856px;width:50px"><u><span class="w2">  </span><span class="w3">60 </span></u></div>
<div class="r fd" style="left:1170px;top:856px;width:740px"><u><span class="w5">+--  </span><span class="w2">3 </span><span class="cjk">行</span><span class="w2">: </span><span class="w12">Idle(Box&lt;Net</span><span class="w11">workStream </span><span class="w2">+ </span><span class="w7">Send&gt;),</span><span class="dash w12">------------</span><span class="dash w12">------------</span><span class="dash w7">-------</span></u></div>
<div class="r ln" style="left:1120px;top:875px;width:50px"><u><span class="w2">  </span><span class="w3">63 </span></u></div>
<div class="r" style="left:1170px;top:875px;width:740px"><u><span class="w1">}</span></u></div>
<div class="r ln" style="left:1120px;top:894px;width:50px"><u><span class="w2">  </span><span class="w3">64 </span></u></div>
<div class="r ln" style="left:1120px;top:913px;width:50px"><u><span class="w2">  </span><span class="w3">65 </span></u></div>
<div class="r" style="left:1170px;top:913px;width:740px"><u><span class="k w4">impl</span><span class="w1"> </span><span class="w7">Stream </span><span class="w1">{</span></u></div>
<div class="r fd" style="left:1120px;top:932px;width:50px"><u><span class="w2">  </span><span class="w3">66 </span></u></div>
<div class="r fd" style="left:1170px;top:932px;width:740px"><u><span class="w4">+-- </span><span class="w3">22 </span><span class="cjk">行</span><span class="w2">: </span><span class="w3">fn </span><span class="w12">writer_mut(&amp;</span><span class="w4">mut </span><span class="w6">self) </span><span class="w3">-&gt; </span><span class="w12">Option&lt;&amp;mut </span><span class="w12">HttpWriter&lt;B</span><span class="w11">ufWriter&lt;Bo</span></u></div>
<div class="r ln" style="left:1120px;top:951px;width:50px"><u><span class="w2">  </span><span class="w3">88 </span></u></div>
<div class="r" style="left:1170px;top:951px;width:740px"><u><span class="w1">}</span></u></div>
<div class="r nt-a" style="left:0px;top:970px;width:260px"><u><span class="w1"> </span><span class="w12">~/…/src/http</span><span class="w12">/NERD_tree_2</span><span class="w1"> </span></u></div>
<div class="r nt-b" style="left:260px;top:970px;width:50px"></div>
<div class="r blk" style="left:310px;top:970px;width:20px"></div>
<div class="r nc" style="left:330px;top:970px;width:600px"><u><span class="w10">message.rs</span></u></div>
<div class="r nc2" style="left:930px;top:970px;width:180px"><u><span class="w3">   </span><span class="dd w2">0%</span><span class="w1"> </span><span class="bar w1">|</span><span class="w1"> </span><span class="w5">LN   </span><span class="b1 w1">1</span><span class="dd w2">:1</span><span class="w2">  </span></u></div>
<div class="r blk" style="left:1110px;top:970px;width:20px"></div>
<div class="r nc" style="left:1130px;top:970px;width:600px"><u><span class="w5">h1.rs</span></u></div>
<div class="r nc2" style="left:1730px;top:970px;width:180px"><u><span class="w3">   </span><span class="dd w2">0%</span><span class="w1"> </span><span class="bar w1">|</span><span class="w1"> </span><span class="w5">LN   </span><span class="b1 w1">1</span><span class="dd w2">:1</span><span class="w2">  </span></u></div>
</div>
<div id="bot"></div>
</body></html>
